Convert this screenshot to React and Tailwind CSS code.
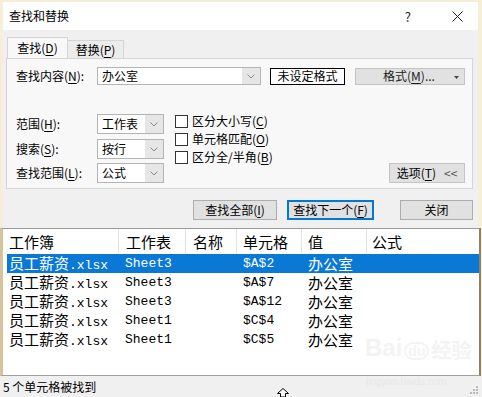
import React from "react";

const cjk = "font-['Noto_Sans_CJK_SC',sans-serif]";
const mono = "font-['Liberation_Mono','Noto_Sans_CJK_SC',monospace]";

const K = ({ children }) => <span className="underline underline-offset-[2px] decoration-1">{children}</span>;

function Chevron() {
  return (
    <svg width="8" height="5" viewBox="0 0 8 5">
      <path d="M0.5 0.5 L4 4 L7.5 0.5" fill="none" stroke="#8a8a8a" strokeWidth="1" />
    </svg>
  );
}

function Select({ value }) {
  return (
    <div className="flex h-[20px] w-[67px] border border-[#b4b4b4] bg-white">
      <div className="flex-1 pl-[4px] text-[12px] leading-[18px]">{value}</div>
      <div className="flex w-[18px] items-center justify-center bg-[#e6e6e6]">
        <Chevron />
      </div>
    </div>
  );
}

function Check({ children }) {
  return (
    <div className="flex h-[18px] items-center">
      <div className="h-[13px] w-[13px] border border-[#333] bg-white" />
      <span className="ml-[4px] text-[12px] leading-none">{children}</span>
    </div>
  );
}

const rows = [
  { sheet: "Sheet3", cell: "$A$2", sel: true },
  { sheet: "Sheet3", cell: "$A$7" },
  { sheet: "Sheet3", cell: "$A$12" },
  { sheet: "Sheet1", cell: "$C$4" },
  { sheet: "Sheet1", cell: "$C$5" },
];

export default function App() {
  return (
    <div className={`relative flex h-[397px] w-[482px] flex-col overflow-hidden bg-[#f7eed8] text-black ${cjk}`}>
      <div className="h-[2px]" />
      {/* title bar */}
      <div className="mx-[3px] mr-[4px] flex h-[28px] items-center bg-white pl-[6px]">
        <span className="text-[12px] leading-none">查找和替换</span>
        <span className="ml-auto mr-[41px] text-[13px] leading-none text-[#222]">?</span>
        <svg width="11" height="11" viewBox="0 0 11 11" className="mr-[15px]">
          <path d="M0.5 0.5 L10.5 10.5 M10.5 0.5 L0.5 10.5" stroke="#222" strokeWidth="1" />
        </svg>
      </div>

      {/* dialog body */}
      <div className="mx-[3px] mr-[4px] h-[198px] bg-[#f0f0f0] pt-[8px]">
        <div className="flex h-[20px] items-end pl-[4px]">
          <div className="relative z-10 flex h-[21px] w-[61px] items-center justify-center border border-b-0 border-[#d5d5d5] bg-[#f8f8f8] text-[12px] leading-none">
            查找(<K>D</K>)
          </div>
          <div className="flex h-[18px] w-[56px] items-center justify-center border border-b-0 border-l-0 border-[#d5d5d5] bg-[#ececec] text-[12px] leading-none">
            替换(<K>P</K>)
          </div>
        </div>
        <div className="ml-[3px] h-[131px] w-[467px] border border-[#d5d5d5] bg-[#f8f8f8] pl-[9px] pr-[7px] pt-[8px]">
          <div className="flex h-[18px] items-center">
            <span className="w-[81px] text-[12px] leading-none">查找内容(<K>N</K>):</span>
            <div className="flex h-[18px] w-[164px] border border-[#b4b4b4] bg-white">
              <div className="flex-1 pl-[4px] text-[12px] leading-[16px]">办公室</div>
              <div className="flex w-[18px] items-center justify-center bg-[#e6e6e6]">
                <Chevron />
              </div>
            </div>
            <div className="ml-[9px] flex h-[17px] w-[75px] items-center justify-center border border-black bg-white text-[12px] leading-none">
              未设定格式
            </div>
            <div className="relative ml-[10px] flex h-[17px] w-[110px] items-center justify-center border border-[#c4c4c4] bg-[#e1e1e1] text-[12px] leading-none text-[#222]">
              <span className="-ml-[2px]">格式(<K>M</K>)...</span>
              <svg width="5" height="3" viewBox="0 0 5 3" className="absolute right-[5px] top-[7px]">
                <path d="M0 0 L5 0 L2.5 3 Z" fill="#444" />
              </svg>
            </div>
          </div>

          <div className="mt-[29px] flex">
            <div className="flex flex-col">
              <div className="flex h-[20px] items-center">
                <span className="w-[81px] text-[12px] leading-none">范围(<K>H</K>):</span>
                <Select value="工作表" />
              </div>
              <div className="mt-[5px] flex h-[20px] items-center">
                <span className="w-[81px] text-[12px] leading-none">搜索(<K>S</K>):</span>
                <Select value="按行" />
              </div>
              <div className="mt-[4px] flex h-[20px] items-center">
                <span className="w-[81px] text-[12px] leading-none">查找范围(<K>L</K>):</span>
                <Select value="公式" />
              </div>
            </div>
            <div className="-mt-[2px] ml-[11px] flex flex-col">
              <Check>区分大小写(<K>C</K>)</Check>
              <Check>单元格匹配(<K>O</K>)</Check>
              <Check>区分全/半角(<K>B</K>)</Check>
            </div>
            <div className="ml-auto flex h-[20px] w-[76px] items-center justify-center self-end border border-[#c4c4c4] bg-[#e1e1e1] text-[12px] leading-none">
              选项(<K>T</K>)<span className="ml-[8px] text-[#555]">&lt;&lt;</span>
            </div>
          </div>
        </div>

        <div className="mt-[11px] flex h-[20px] pl-[190px]">
          <div className="flex w-[84px] items-center justify-center border border-[#adadad] bg-[#e1e1e1] text-[12px] leading-none">
            查找全部(<K>I</K>)
          </div>
          <div className="ml-[10px] flex w-[87px] items-center justify-center border-2 border-[#0078d7] bg-[#e1e1e1] text-[12px] leading-none">
            查找下一个(<K>F</K>)
          </div>
          <div className="ml-[26px] flex w-[73px] items-center justify-center border border-[#adadad] bg-[#e1e1e1] text-[12px] leading-none">
            关闭
          </div>
        </div>
      </div>

      {/* results list */}
      <div className="relative h-[148px] w-[481px] border-b border-l-[3px] border-r-[2px] border-t border-b-[#a0a0a0] border-l-[#d6c39a] border-r-[#8f806a] border-t-[#9a9a9a] bg-white">
        <div className="flex h-[25px] items-center text-[15px] leading-none">
          <div className="w-[115px] pl-[6px]">工作簿</div>
          <div className="h-full w-px bg-[#e3e3e3]" />
          <div className="w-[66px] pl-[7px]">工作表</div>
          <div className="h-full w-px bg-[#e3e3e3]" />
          <div className="w-[50px] pl-[7px]">名称</div>
          <div className="h-full w-px bg-[#e3e3e3]" />
          <div className="w-[64px] pl-[6px]">单元格</div>
          <div className="h-full w-px bg-[#e3e3e3]" />
          <div className="w-[64px] pl-[6px]">值</div>
          <div className="h-full w-px bg-[#e3e3e3]" />
          <div className="pl-[5px]">公式</div>
        </div>
        <div className={`ml-[4px] flex flex-col ${mono}`}>
          {rows.map((r, i) => (
            <div
              key={i}
              className={`flex h-[19px] items-center text-[13px] leading-none ${r.sel ? "bg-[#0a78d5] text-white" : "text-black"}`}
            >
              <div className="w-[111px] pl-[2px]">
                <span className={`text-[15px] ${cjk}`}>员工薪资</span>.xlsx
              </div>
              <div className="w-[125px] pl-[7px]">{r.sheet}</div>
              <div className="w-[65px]">{r.cell}</div>
              <div className={`text-[15px] ${cjk}`}>办公室</div>
            </div>
          ))}
        </div>
        <div className="absolute left-[362px] top-[107px] flex items-end gap-[2px] font-['Liberation_Sans',sans-serif] text-[24px] font-bold leading-none text-[#f3f3f3]">
          <span>Bai</span>
          <span className="rounded-full border-2 border-[#f3f3f3] px-[2px] text-[14px]">du</span>
          <span className={`${cjk} text-[20px]`}>经验</span>
        </div>
      </div>

      {/* status bar */}
      <div className="relative flex h-[21px] items-center bg-[#f0f0f0] pl-[3px] text-[12px] leading-none">
        <span>5 个单元格被找到</span>
        <span className="absolute left-[366px] top-[1px] font-['Liberation_Sans',sans-serif] text-[10px] text-[#e8e8e8]">jingyan.baidu.com</span>
        <svg width="14" height="9" viewBox="0 0 14 9" className="absolute left-[276px] top-[12px]">
          <path d="M7 0.5 L12.5 5.5 L9.5 5.5 L9.5 9 L4.5 9 L4.5 5.5 L1.5 5.5 Z" fill="white" stroke="black" strokeWidth="1" />
        </svg>
        <svg width="10" height="10" viewBox="0 0 10 10" className="absolute right-[3px] bottom-[2px]">
          <rect x="7" y="1" width="2" height="2" fill="#b9b9b9" />
          <rect x="4" y="4" width="2" height="2" fill="#b9b9b9" />
          <rect x="7" y="4" width="2" height="2" fill="#b9b9b9" />
          <rect x="1" y="7" width="2" height="2" fill="#b9b9b9" />
          <rect x="4" y="7" width="2" height="2" fill="#b9b9b9" />
          <rect x="7" y="7" width="2" height="2" fill="#b9b9b9" />
        </svg>
      </div>
    </div>
  );
}
